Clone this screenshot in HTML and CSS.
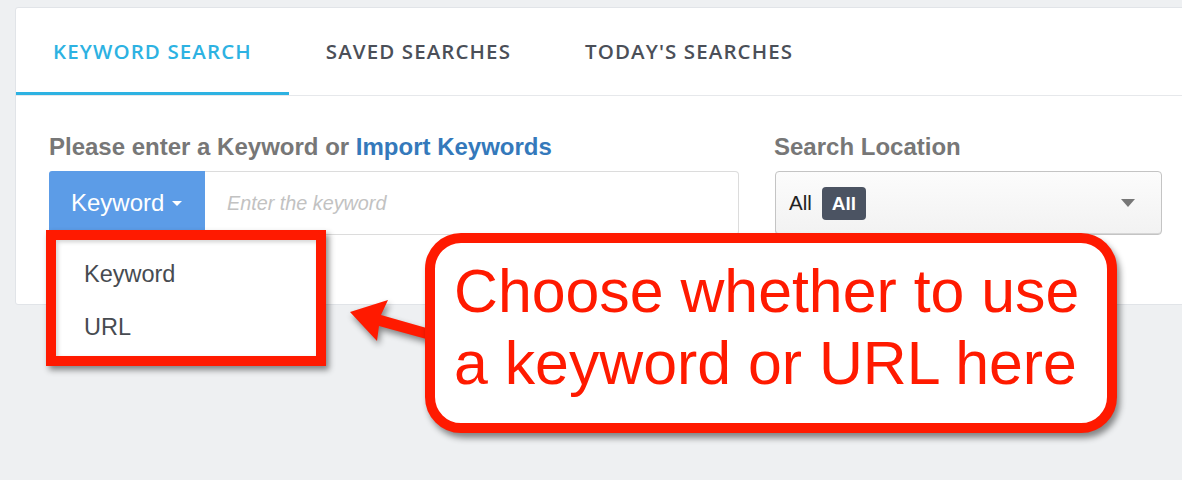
FILE: index.html
```html
<!DOCTYPE html>
<html>
<head>
<meta charset="utf-8">
<link rel="stylesheet" href="styles.css">
</head>
<body>
<div class="stage">
  <div class="card">
    <div class="tabs">
      <div class="tab active">KEYWORD SEARCH</div>
      <div class="tab">SAVED SEARCHES</div>
      <div class="tab">TODAY'S SEARCHES</div>
    </div>
    <div class="form">
      <div class="col col-keyword">
        <div class="label">Please enter a Keyword or <span class="link">Import Keywords</span></div>
        <div class="input-group">
          <div class="btn-type">Keyword <span class="caret"></span></div>
          <div class="text-input">Enter the keyword</div>
          <div class="menu">
            <div class="menu-item">Keyword</div>
            <div class="menu-item">URL</div>
          </div>
        </div>
      </div>
      <div class="col col-location">
        <div class="label">Search Location</div>
        <div class="select">
          <span class="sel-text">All</span>
          <span class="badge">All</span>
          <span class="sel-arrow"></span>
        </div>
      </div>
    </div>
  </div>

  <svg class="arrow" width="100" height="60" viewBox="340 290 100 60">
    <polygon points="350,312 388,300 381,315 430,329 430,340 379,326 377,341" fill="#ff1a00"/>
  </svg>

  <div class="callout">Choose whether to use<br>a keyword or URL here</div>
</div>
</body>
</html>
```

FILE: styles.css
```css
* { box-sizing: border-box; }
html, body { margin: 0; padding: 0; }
body {
  background: #eef0f2;
  font-family: "Liberation Sans", Arial, sans-serif;
}
.stage {
  position: relative;
  width: 1182px;
  height: 480px;
  overflow: hidden;
  padding: 7px 0 0 15px;
}
.card {
  width: 1190px;
  height: 298px;
  background: #fff;
  border: 1px solid #e1e4e8;
  border-radius: 3px;
}
.tabs {
  display: flex;
  border-bottom: 1px solid #e6e8eb;
}
.tab {
  height: 87px;
  padding: 2px 37px 0 37px;
  display: flex;
  align-items: center;
  border-bottom: 3px solid transparent;
  font-family: "Open Sans", sans-serif;
  font-weight: 600;
  font-size: 20.5px;
  letter-spacing: 1.1px;
  color: #4b4f58;
}
.tab.active {
  color: #2db2e2;
  border-bottom-color: #2db2e2;
}
.form {
  display: flex;
  gap: 35px;
  padding: 37px 0 0 33px;
}
.col-keyword { width: 690px; }
.col-location { width: 388px; }
.label {
  font-weight: bold;
  font-size: 24px;
  line-height: 28px;
  color: #777;
  margin-bottom: 10px;
}
.link { color: #3479bb; }
.input-group {
  position: relative;
  display: flex;
  height: 64px;
}
.btn-type {
  width: 156px;
  background: #5c9ce7;
  color: #fff;
  font-size: 24px;
  display: flex;
  align-items: center;
  padding-left: 22px;
  border-radius: 3px 0 0 3px;
}
.caret {
  display: inline-block;
  width: 0;
  height: 0;
  margin-left: 8px;
  border-left: 5px solid transparent;
  border-right: 5px solid transparent;
  border-top: 5px solid #fff;
}
.text-input {
  flex: 1;
  border: 1px solid #dcdcdc;
  border-left: none;
  border-radius: 0 4px 4px 0;
  display: flex;
  align-items: center;
  padding-left: 22px;
  font-size: 19.8px;
  font-style: italic;
  color: #c2c2c2;
}
.menu {
  position: absolute;
  left: -3px;
  top: 59px;
  width: 280px;
  height: 136px;
  background: #fff;
  border: 10px solid #ff1a00;
  box-shadow: 3px 4px 6px rgba(0,0,0,0.45), inset 2px 2px 4px rgba(0,0,0,0.18);
  padding: 8px 0 0 28px;
}
.menu-item {
  font-size: 23.5px;
  line-height: 53px;
  color: #474b51;
}
.select {
  margin-left: 1px;
  height: 64px;
  border: 1px solid #c4c4c4;
  border-radius: 4px;
  background: linear-gradient(#fcfcfc, #f2f2f2);
  box-shadow: inset 0 -1px 0 #d6d6d6;
  display: flex;
  align-items: center;
  padding-left: 13px;
}
.sel-text {
  font-size: 20.5px;
  color: #222;
}
.badge {
  margin-left: 10px;
  background: #4b5362;
  color: #fff;
  font-weight: bold;
  font-size: 19px;
  border-radius: 4px;
  height: 33px;
  line-height: 33px;
  padding: 0 10px;
}
.sel-arrow {
  margin-left: auto;
  margin-right: 26px;
  width: 0;
  height: 0;
  border-left: 7px solid transparent;
  border-right: 7px solid transparent;
  border-top: 8px solid #777;
}
.arrow {
  position: absolute;
  left: 340px;
  top: 290px;
  overflow: visible;
  filter: drop-shadow(2px 4px 3px rgba(0,0,0,0.45));
}
.callout {
  position: absolute;
  left: 425px;
  top: 233px;
  width: 692px;
  height: 200px;
  background: #fff;
  border: 10px solid #ff1a00;
  border-radius: 36px;
  box-shadow: 3px 5px 6px rgba(0,0,0,0.45);
  padding: 12px 0 0 19px;
  font-size: 60.8px;
  line-height: 72px;
  color: #ff1a00;
}
```
